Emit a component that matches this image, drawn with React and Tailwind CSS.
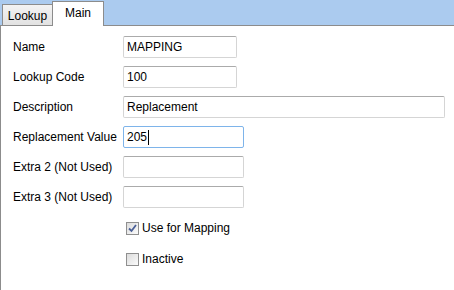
import React from "react";

function Field({ label, value, width, focused, caret }) {
  return (
    <div className="flex items-center h-[22px]">
      <div className="w-[110px] shrink-0">{label}</div>
      <div
        className={`h-[22px] ${width} rounded-[2px] border flex items-center px-[3px] ${
          focused ? "border-[#7eb4ea]" : "border-[#d5d5d5] border-t-[#ababab]"
        } bg-white`}
      >
        <span>{value}</span>
        {caret && <span className="w-px h-[15px] bg-black ml-px" />}
      </div>
    </div>
  );
}

function Check({ checked, label }) {
  return (
    <div className="flex items-center h-[14px] gap-[3px]">
      <div className="w-[13px] h-[13px] border border-[#8f8f8f] bg-gradient-to-br from-[#dcdcdc] to-[#fbfbfb] flex items-center justify-center">
        {checked && (
          <svg width="9" height="9" viewBox="0 0 9 9">
            <path d="M1 4.5 L3.5 7 L8 1" fill="none" stroke="#4a5f97" strokeWidth="1.8" />
          </svg>
        )}
      </div>
      <span>{label}</span>
    </div>
  );
}

export default function App() {
  return (
    <div
      className="w-[454px] h-[290px] bg-[#abcbef] text-[12px] text-black relative overflow-hidden"
      style={{ fontFamily: '"Liberation Sans", Arial, sans-serif' }}
    >
      <div className="h-[25px] flex items-end pl-[2px] relative">
        <div className="h-[21px] w-[51px] border border-[#8c8c8c] border-b-0 bg-gradient-to-b from-[#f3f3f3] to-[#e2e2e2] flex items-center justify-center pt-px">
          Lookup
        </div>
        <div className="h-[25px] w-[52px] -ml-px border border-[#8c8c8c] border-b-0 bg-white flex items-center justify-center pb-[2px] relative z-10 translate-y-px">
          Main
        </div>
      </div>
      <div className="bg-white border-t border-l border-[#8c8c8c] h-[266px] pl-[12px] pt-[10px] flex flex-col">
        <div className="flex flex-col gap-[8px]">
          <Field label="Name" value="MAPPING" width="w-[114px]" />
          <Field label="Lookup Code" value="100" width="w-[114px]" />
          <Field label="Description" value="Replacement" width="w-[322px]" />
          <Field label="Replacement Value" value="205" width="w-[121px]" focused caret />
          <Field label="Extra 2 (Not Used)" value="" width="w-[121px]" />
          <Field label="Extra 3 (Not Used)" value="" width="w-[121px]" />
        </div>
        <div className="flex flex-col gap-[17px] pl-[113px] mt-[13px]">
          <Check checked label="Use for Mapping" />
          <Check label="Inactive" />
        </div>
      </div>
    </div>
  );
}
